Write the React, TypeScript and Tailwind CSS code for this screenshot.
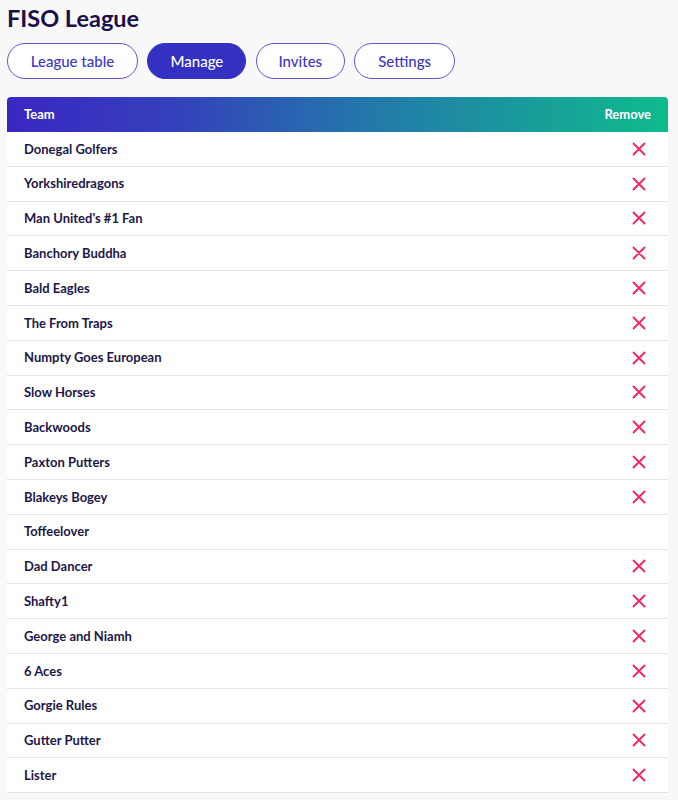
import { useState } from 'react'

const teams: { name: string; removable: boolean }[] = [
  { name: 'Donegal Golfers', removable: true },
  { name: 'Yorkshiredragons', removable: true },
  { name: "Man United's #1 Fan", removable: true },
  { name: 'Banchory Buddha', removable: true },
  { name: 'Bald Eagles', removable: true },
  { name: 'The From Traps', removable: true },
  { name: 'Numpty Goes European', removable: true },
  { name: 'Slow Horses', removable: true },
  { name: 'Backwoods', removable: true },
  { name: 'Paxton Putters', removable: true },
  { name: 'Blakeys Bogey', removable: true },
  { name: 'Toffeelover', removable: false },
  { name: 'Dad Dancer', removable: true },
  { name: 'Shafty1', removable: true },
  { name: 'George and Niamh', removable: true },
  { name: '6 Aces', removable: true },
  { name: 'Gorgie Rules', removable: true },
  { name: 'Gutter Putter', removable: true },
  { name: 'Lister', removable: true },
]

const tabs = [
  { label: 'League table', w: 'w-[131px]' },
  { label: 'Manage', w: 'w-[99px]' },
  { label: 'Invites', w: 'w-[89px]' },
  { label: 'Settings', w: 'w-[101px]' },
]

function RemoveIcon() {
  return (
    <svg width="14" height="14" viewBox="0 0 14 14" fill="none">
      <path d="M1.5 1.5L12.5 12.5M12.5 1.5L1.5 12.5" stroke="#f5245c" strokeWidth="1.8" strokeLinecap="round" />
    </svg>
  )
}

export default function App() {
  const [active, setActive] = useState('Manage')

  return (
    <div className="min-h-[800px] bg-[#f8f8f8] px-[7px] pt-[4px] font-['Lato','Liberation_Sans',sans-serif] text-[#1d1748]">
      <h1 className="text-[23.5px] font-bold leading-[28px] text-[#1b0f4b]">FISO League</h1>

      <div className="mt-[11px] flex gap-[9.4px]">
        {tabs.map(t => (
          <button
            key={t.label}
            onClick={() => setActive(t.label)}
            className={`h-[36px] ${t.w} rounded-full border-[1.5px] text-[15px] font-medium ${
              t.label === active
                ? 'border-[#3430c2] bg-[#3430c2] text-white'
                : 'border-[#5d55d4] bg-white text-[#3d36c0]'
            }`}
          >
            {t.label}
          </button>
        ))}
      </div>

      <div className="mt-[18px] w-[661px] bg-white">
        <div className="flex h-[35px] items-center justify-between rounded-t-[4px] bg-[linear-gradient(90deg,#3a27c2_0%,#3440bc_25%,#2379aa_55%,#0fbb8d_100%)] px-[17px] text-[13px] font-bold text-white">
          <span>Team</span>
          <span>Remove</span>
        </div>
        {teams.map(t => (
          <div
            key={t.name}
            className="flex h-[34.8px] items-center justify-between border-b border-[#e4e4e4] pl-[17px] pr-[22px]"
          >
            <span className="pt-[1px] text-[13px] font-bold text-[#1d1748]">{t.name}</span>
            {t.removable && <RemoveIcon />}
          </div>
        ))}
      </div>
    </div>
  )
}
